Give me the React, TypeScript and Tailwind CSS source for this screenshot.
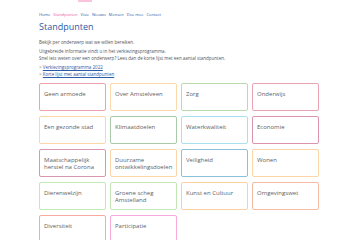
const topics: { name: string; cls: string }[] = [
  { name: "Geen armoede", cls: "border-[#eba3ad]" },
  { name: "Over Amstelveen", cls: "border-[#fbd9ac]" },
  { name: "Zorg", cls: "border-[#b9dbae]" },
  { name: "Onderwijs", cls: "border-[#e9a3b3]" },
  { name: "Een gezonde stad", cls: "border-[#fbd6a6]" },
  { name: "Klimaatdoelen", cls: "border-[#a9cba9]" },
  { name: "Waterkwaliteit", cls: "border-[#a9e1f2]" },
  { name: "Economie", cls: "border-[#dc94ac]" },
  { name: "Maatschappelijk herstel na Corona", cls: "border-[#d996b0]" },
  { name: "Duurzame ontwikkelingsdoelen", cls: "border-[#fbd6ab]" },
  { name: "Veiligheid", cls: "border-[#8fc0d9]" },
  { name: "Wonen", cls: "border-[#fbd6a7]" },
  { name: "Dierenwelzijn", cls: "border-[#c4e8b4]" },
  { name: "Groene scheg Amstelland", cls: "border-[#c4e8b5]" },
  { name: "Kunst en Cultuur", cls: "border-[#fbd0a0]" },
  { name: "Omgevingswet", cls: "border-[#f7bba3]" },
  { name: "Diversiteit", cls: "border-[#f7aaa2]" },
  { name: "Participatie", cls: "border-[#f7aadb]" },
];

const navItems = ["Home", "Standpunten", "Visie", "Nieuws", "Mensen", "Doe mee", "Contact"];

export default function App() {
  return (
    <div className="w-[360px] h-[240px] overflow-hidden bg-white font-['Open_Sans',sans-serif]">
      <div className="ml-[78px] w-[14px] h-[2px] bg-[#fbc4dc]" />

      <div className="ml-[39px] w-[280px]">
        <nav className="flex gap-[3px] mt-[10px] text-[4px] leading-[5px] text-[#2a5ba8]">
          {navItems.map((item) => (
            <span key={item} className={item === "Standpunten" ? "text-[#ec5a9d]" : ""}>
              {item}
            </span>
          ))}
        </nav>

        <h1 className="mt-[4px] text-[9px] leading-[11px] text-[#2a5ba8]">Standpunten</h1>

        <div className="mt-[7px] text-[4.5px] leading-[7px] text-[#555]">
          <p>Bekijk per onderwerp wat we willen bereiken.</p>
          <p className="mt-[2px]">Uitgebreide informatie vindt u in het verkiezingsprogramma.</p>
          <p>Snel iets weten over een onderwerp? Lees dan de korte lijst met een aantal standpunten.</p>
          <ul className="mt-[2px]">
            <li>
              &gt; <span className="text-[#2a5ba8] underline">Verkiezingsprogramma 2022</span>
            </li>
            <li>
              &gt; <span className="text-[#2a5ba8] underline">Korte lijst met aantal standpunten</span>
            </li>
          </ul>
        </div>

        <div className="mt-[5px] grid grid-cols-4 gap-x-[4px] gap-y-[5px]">
          {topics.map((t) => (
            <div
              key={t.name}
              className={`h-[28px] rounded-[2px] border border-solid bg-white px-[4px] pt-[6.5px] text-[6px] leading-[7px] text-[#5f5f5f] ${t.cls}`}
            >
              {t.name}
            </div>
          ))}
        </div>
      </div>
    </div>
  );
}
